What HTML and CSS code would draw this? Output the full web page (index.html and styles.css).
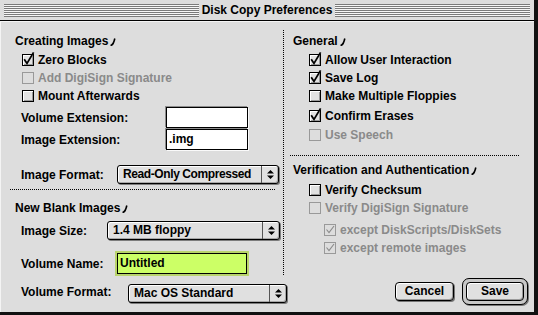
FILE: index.html
```html
<!DOCTYPE html>
<html>
<head>
  <title>Disk Copy Preferences</title>
  <link rel="stylesheet" href="styles.css">
</head>
<body>
  <div class="window">
    <div class="titlebar">
      <div class="stripes"></div>
      <div class="title">Disk Copy Preferences</div>
      <div class="stripes"></div>
    </div>

    <div class="content">
      <div class="panes">
        <!-- left column -->
        <div class="pane left">
          <div class="group-title">Creating Images<svg class="mark" width="6" height="8" viewBox="0 0 6 8"><path d="M0.5 7.5 Q3.5 7 4.8 0.5" fill="none" stroke="#000" stroke-width="1.6"/></svg></div>
          <div class="check first"><span class="box on"><svg viewBox="0 0 12 12"><path d="M2.2 5.2 L5 9.4 L11.6 -1.6"/></svg></span>Zero Blocks</div>
          <div class="check off"><span class="box"></span>Add DigiSign Signature</div>
          <div class="check"><span class="box"></span>Mount Afterwards</div>

          <div class="field-row first">
            <span class="label w145">Volume Extension:</span>
            <div class="field"></div>
          </div>
          <div class="field-row">
            <span class="label w145">Image Extension:</span>
            <div class="field">.img</div>
          </div>

          <div class="popup-row format">
            <span class="label w96">Image Format:</span>
            <div class="popup w162"><span class="popup-text tight">Read-Only Compressed</span><span class="arrows"><svg width="7" height="11" viewBox="0 0 7 11"><path d="M0 4.5 L3.5 1 L7 4.5 Z M0 6.5 L3.5 10 L7 6.5 Z"/></svg></span></div>
          </div>

          <div class="dots left-dots"></div>

          <div class="group-title second">New Blank Images<svg class="mark" width="6" height="8" viewBox="0 0 6 8"><path d="M0.5 7.5 Q3.5 7 4.8 0.5" fill="none" stroke="#000" stroke-width="1.6"/></svg></div>
          <div class="popup-row size">
            <span class="label w86">Image Size:</span>
            <div class="popup w173"><span class="popup-text">1.4 MB floppy</span><span class="arrows"><svg width="7" height="11" viewBox="0 0 7 11"><path d="M0 4.5 L3.5 1 L7 4.5 Z M0 6.5 L3.5 10 L7 6.5 Z"/></svg></span></div>
          </div>
          <div class="field-row name">
            <span class="label w96">Volume Name:</span>
            <div class="field focus">Untitled</div>
          </div>
        </div>

        <div class="divider"></div>

        <!-- right column -->
        <div class="pane right">
          <div class="group-title">General<svg class="mark" width="6" height="8" viewBox="0 0 6 8"><path d="M0.5 7.5 Q3.5 7 4.8 0.5" fill="none" stroke="#000" stroke-width="1.6"/></svg></div>
          <div class="check first"><span class="box on"><svg viewBox="0 0 12 12"><path d="M2.2 5.2 L5 9.4 L11.6 -1.6"/></svg></span>Allow User Interaction</div>
          <div class="check"><span class="box on"><svg viewBox="0 0 12 12"><path d="M2.2 5.2 L5 9.4 L11.6 -1.6"/></svg></span>Save Log</div>
          <div class="check"><span class="box"></span>Make Multiple Floppies</div>
          <div class="check confirm"><span class="box on"><svg viewBox="0 0 12 12"><path d="M2.2 5.2 L5 9.4 L11.6 -1.6"/></svg></span>Confirm Erases</div>
          <div class="check off speech"><span class="box"></span>Use Speech</div>

          <div class="dots right-dots"></div>

          <div class="group-title verify">Verification and Authentication<svg class="mark" width="6" height="8" viewBox="0 0 6 8"><path d="M0.5 7.5 Q3.5 7 4.8 0.5" fill="none" stroke="#000" stroke-width="1.6"/></svg></div>
          <div class="check checksum"><span class="box"></span>Verify Checksum</div>
          <div class="check off"><span class="box"></span>Verify DigiSign Signature</div>
          <div class="check off sub first-sub"><span class="box on"><svg viewBox="0 0 12 12"><path d="M2.5 5.5 L5 8.6 L10 2"/></svg></span>except DiskScripts/DiskSets</div>
          <div class="check off sub"><span class="box on"><svg viewBox="0 0 12 12"><path d="M2.5 5.5 L5 8.6 L10 2"/></svg></span>except remote images</div>
        </div>
      </div>

      <div class="footer">
        <span class="label w107">Volume Format:</span>
        <div class="popup w159 volume-format"><span class="popup-text">Mac OS Standard</span><span class="arrows"><svg width="7" height="11" viewBox="0 0 7 11"><path d="M0 4.5 L3.5 1 L7 4.5 Z M0 6.5 L3.5 10 L7 6.5 Z"/></svg></span></div>
        <div class="spacer"></div>
        <div class="button cancel">Cancel</div>
        <div class="default-ring"><div class="button">Save</div></div>
      </div>
    </div>
  </div>
</body>
</html>
```

FILE: styles.css
```css
body {
  margin: 0;
  background: #000;
  font-family: "Liberation Sans", Arial, sans-serif;
  font-size: 12px;
  font-weight: bold;
  color: #000;
}

.window {
  width: 538px;
  height: 315px;
  box-sizing: border-box;
  border-right: 4px solid #111;
  border-bottom: 3px solid #111;
  background: #ddd;
  display: flex;
  flex-direction: column;
}

/* title bar */
.titlebar {
  height: 20px;
  border-bottom: 1px solid #000;
  display: flex;
  padding: 0 4px;
  background: #ddd;
}

.stripes {
  flex: 1;
  height: 13px;
  margin-top: 4px;
  background: repeating-linear-gradient(to bottom, #7a7a7a 0 1px, #f6f6f6 1px 2px);
}

.title {
  padding: 0 3px;
  line-height: 20px;
  white-space: nowrap;
}

.content {
  flex: 1;
  display: flex;
  flex-direction: column;
  box-shadow: inset 1px 1px #f4f4f4;
}

.panes {
  height: 257px;
  display: flex;
}

.pane {
  box-sizing: border-box;
  padding-top: 12px;
}

.pane.left {
  width: 283px;
  padding-left: 15px;
}

.pane.right {
  flex: 1;
  padding-left: 9px;
}

.divider {
  width: 1px;
  height: 245px;
  margin-top: 9px;
  background: repeating-linear-gradient(to bottom, #000 0 1px, transparent 1px 2px);
}

.dots {
  height: 1px;
  background: repeating-linear-gradient(to right, #000 0 1px, transparent 1px 2px);
}

.left-dots {
  margin: 5px 0 0 -5px;
  width: 265px;
}

.right-dots {
  margin: 11px 0 0 -3px;
  width: 229px;
}

.group-title {
  height: 16px;
  line-height: 16px;
  display: flex;
  align-items: center;
  white-space: nowrap;
}

.group-title.second { margin-top: 10px; }
.group-title.verify { margin-top: 6px; }

.mark {
  margin: 1px 0 0 2px;
}

/* checkboxes */
.check {
  height: 18px;
  display: flex;
  align-items: center;
  margin-left: 7px;
  white-space: nowrap;
}

.pane.right .check { margin-left: 16px; }
.pane.right .check.sub { margin-left: 31px; }

.check.first { margin-top: 2px; }
.check.confirm { margin-top: 2px; }
.check.speech { margin-top: 1px; }
.check.checksum { margin-top: 3px; }
.check.first-sub { margin-top: 4px; }

.box {
  position: relative;
  flex: none;
  width: 12px;
  height: 12px;
  box-sizing: border-box;
  margin-right: 4px;
  border: 1px solid #000;
  background: #e2e2e2;
  box-shadow: inset 1px 1px #fff, inset -1px -1px #9a9a9a;
}

.box svg {
  position: absolute;
  left: -1px;
  top: -1px;
  width: 12px;
  height: 12px;
  overflow: visible;
}

.box svg path {
  fill: none;
  stroke: #000;
  stroke-width: 1.8;
}

.check.off {
  color: #8a8a8a;
}

.check.off .box {
  border-color: #999;
  background: #ddd;
  box-shadow: none;
}

.check.off .box svg path {
  stroke: #8a8a8a;
  stroke-width: 1.1;
}

/* labels, fields, popups */
.label {
  display: inline-block;
  flex: none;
  white-space: nowrap;
}

.w145 { width: 145px; }
.w96 { width: 96px; }
.w86 { width: 86px; }
.w107 { width: 107px; }

.field-row,
.popup-row {
  display: flex;
  align-items: center;
  margin-left: 6px;
}

.field-row { margin-top: 1px; }
.field-row.first { margin-top: 2px; }
.field-row.name { margin-top: 13px; }
.popup-row.format { margin-top: 15px; }
.popup-row.size { margin-top: 5px; }

.field {
  width: 82px;
  height: 21px;
  box-sizing: border-box;
  border: 1px solid #000;
  background: #fff;
  padding: 0 2px;
  line-height: 19px;
  box-shadow: -1px -1px #8c8c8c, 1px 1px #fafafa;
}

.field.focus {
  width: 130px;
  background: #ccff66;
  box-shadow: 0 0 0 2px #b9d46c;
}

.popup {
  height: 19px;
  box-sizing: border-box;
  border: 1px solid #000;
  border-radius: 3px;
  background: #e0e0e0;
  display: flex;
  box-shadow: 1px 1px #7c7c7c, inset 1px 1px #fff, inset -1px -1px #a8a8a8;
}

.w162 { width: 162px; }
.w173 { width: 173px; }
.w159 { width: 159px; }

.popup-text {
  flex: 1;
  padding-left: 5px;
  line-height: 17px;
  white-space: nowrap;
  overflow: hidden;
}

.popup-text.tight {
  letter-spacing: -0.4px;
}

.arrows {
  width: 16px;
  flex: none;
  border-left: 1px solid #555;
  display: flex;
  align-items: center;
  justify-content: center;
}

/* bottom row */
.footer {
  height: 27px;
  display: flex;
  align-items: center;
  padding: 0 6px 0 21px;
}

.volume-format {
  margin-top: 4px;
}

.spacer {
  flex: 1;
}

.button {
  width: 58px;
  height: 19px;
  box-sizing: border-box;
  border: 1px solid #000;
  border-radius: 4px;
  background: #e0e0e0;
  text-align: center;
  line-height: 17px;
  box-shadow: inset 1px 1px #fff, inset -1px -1px #9a9a9a;
}

.button.cancel {
  width: 59px;
  margin-right: 8px;
  box-shadow: inset 1px 1px #fff, inset -1px -1px #9a9a9a, 1px 1px #777;
}

.default-ring {
  border: 1px solid #000;
  border-radius: 7px;
  padding: 3px;
  background: #c8c8c8;
  box-shadow: 1px 1px #777;
}
```
